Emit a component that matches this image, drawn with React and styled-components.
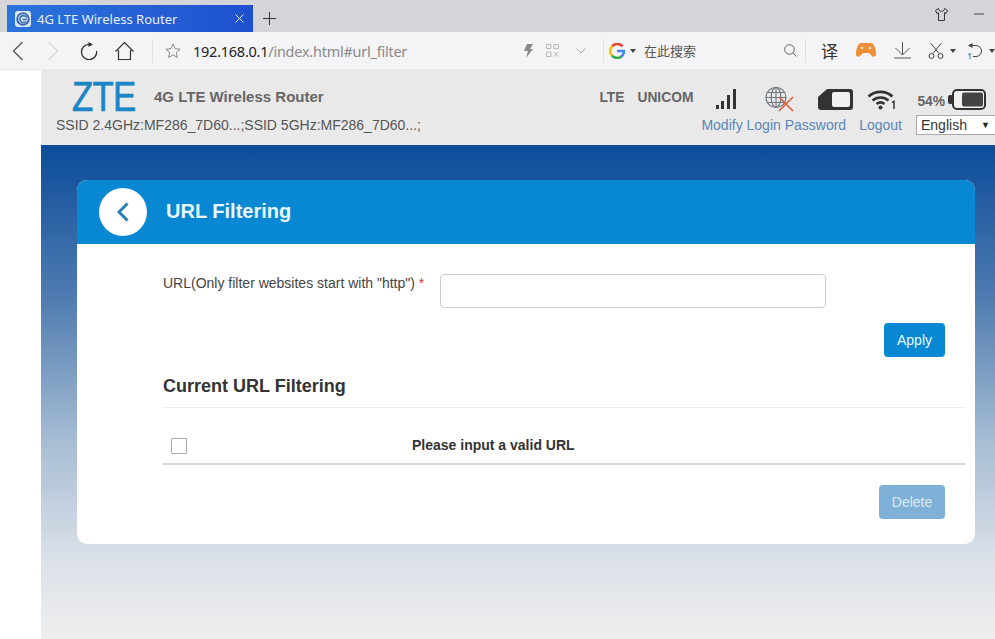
import React from 'react';
import styled, { createGlobalStyle } from 'styled-components';

const GlobalStyle = createGlobalStyle`
  html, body {
    margin: 0;
    padding: 0;
    height: 100%;
    overflow: hidden;
    background: #fff;
    font-family: "Liberation Sans", Arial, sans-serif;
  }
`;

const Page = styled.div`
  width: 995px;
  height: 639px;
  display: flex;
  flex-direction: column;
  overflow: hidden;
`;

/* browser chrome */
const TabBar = styled.div`
  height: 32px;
  flex-shrink: 0;
  display: flex;
  align-items: flex-end;
  padding-left: 7px;
  background: #d5d5d9;
`;

const Tab = styled.div`
  width: 246px;
  height: 27px;
  box-sizing: border-box;
  display: flex;
  align-items: center;
  padding: 0 9px 0 8px;
  background: linear-gradient(90deg, #2b74dc, #1f50cf);
  color: #e8f0ff;
  font: 13px "Noto Sans", "Liberation Sans", sans-serif;
`;

const TabTitle = styled.span`
  flex: 1;
  margin-left: 6px;
`;

const NewTab = styled.div`
  height: 27px;
  display: flex;
  align-items: center;
  margin-left: 10px;
`;

const WindowButtons = styled.div`
  margin-left: auto;
  height: 32px;
  box-sizing: border-box;
  display: flex;
  align-items: center;
  gap: 26px;
  padding: 0 11px 4px 0;
`;

const NavBar = styled.div`
  height: 37px;
  flex-shrink: 0;
  display: flex;
  align-items: center;
  background: #f4f4f6;
  border-bottom: 1px solid #eaeaea;
`;

const Slot = styled.div`
  width: ${({ $w }) => $w}px;
  flex-shrink: 0;
  display: flex;
  align-items: center;
  justify-content: center;
`;

const Divider = styled.div`
  width: 1px;
  height: 24px;
  flex-shrink: 0;
  background: #e0e0e2;
`;

const Url = styled.div`
  width: 323px;
  flex-shrink: 0;
  color: #8a8a8a;
  font: 14.5px "Noto Sans", sans-serif;
  letter-spacing: -0.25px;
  white-space: nowrap;
  b {
    font-weight: 400;
    color: #222;
  }
`;

const SearchText = styled.div`
  width: 131px;
  padding-left: 8px;
  flex-shrink: 0;
  color: #555;
  font: 13px "Noto Sans CJK SC", sans-serif;
`;

const Translate = styled.span`
  color: #333;
  font: 17px "Noto Sans CJK SC", sans-serif;
`;

/* router page */
const Content = styled.div`
  flex: 1;
  display: flex;
  min-height: 0;
`;

const Gutter = styled.div`
  width: 41px;
  flex-shrink: 0;
  background: #fff;
`;

const Main = styled.div`
  flex: 1;
  min-width: 0;
  display: flex;
  flex-direction: column;
`;

const Header = styled.header`
  height: 75px;
  flex-shrink: 0;
  box-sizing: border-box;
  padding: 8px 0 0 15px;
  overflow: hidden;
  background: #e9e9e9;
`;

const HeaderRow = styled.div`
  display: flex;
  align-items: center;
  height: ${({ $h }) => $h}px;
`;

const Logo = styled.div`
  width: 81px;
  margin: 0 -17px 0 16px;
  color: #1b85c6;
  -webkit-text-stroke: 0.7px #1b85c6;
  font-size: 43px;
  line-height: 37px;
  letter-spacing: -1px;
  transform: scaleX(0.81);
  transform-origin: left center;
  white-space: nowrap;
`;

const ProductName = styled.div`
  margin-left: 18px;
  color: #666;
  font-size: 15px;
  font-weight: 700;
`;

const StatusGroup = styled.div`
  margin-left: auto;
  display: flex;
  align-items: center;
  height: 100%;
  padding-top: 5px;
  box-sizing: border-box;
`;

const StatusText = styled.span`
  color: #666;
  font-size: 13.8px;
  font-weight: 700;
  margin-top: ${({ $mt }) => $mt}px;
  margin-right: ${({ $mr }) => $mr}px;
`;

const StatusIcon = styled.div`
  display: flex;
  margin-right: ${({ $mr }) => $mr}px;
`;

const Ssid = styled.div`
  color: #555;
  font-size: 14px;
  white-space: nowrap;
`;

const Links = styled.div`
  margin-left: auto;
  display: flex;
  align-items: center;
  margin-right: -11px;
`;

const HeaderLink = styled.a`
  color: #5b86b8;
  font-size: 14px;
  margin-right: ${({ $mr }) => $mr}px;
`;

const LangSelect = styled.div`
  width: 90px;
  height: 20px;
  box-sizing: border-box;
  display: flex;
  align-items: center;
  padding-left: 4px;
  background: #fff;
  border: 1px solid #a9a9a9;
  color: #333;
  font-size: 14px;
`;

const LangArrow = styled.span`
  margin-left: 14px;
  font-size: 9px;
  color: #222;
`;

const Body = styled.div`
  flex: 1;
  min-height: 0;
  padding: 35px 20px 0 36px;
  background: linear-gradient(180deg, #0b4b9a 0%, #4f7cb0 31%, #a7bdd4 60%, #dde2e9 85%, #eeeeee 100%);
`;

const Card = styled.section`
  height: 364px;
  border-radius: 10px;
  overflow: hidden;
  background: #fff;
`;

const CardHeader = styled.div`
  height: 64px;
  display: flex;
  align-items: center;
  padding-left: 22px;
  background: #0887d3;
`;

const BackCircle = styled.div`
  width: 48px;
  height: 48px;
  border-radius: 50%;
  background: #fff;
  display: flex;
  align-items: center;
  justify-content: center;
`;

const CardTitle = styled.h1`
  margin: -2px 0 0 19px;
  color: #e8f8ff;
  font-size: 20px;
  font-weight: 700;
`;

const CardBody = styled.div`
  padding: 30px 10px 0 86px;
`;

const FormRow = styled.div`
  display: flex;
  align-items: center;
`;

const Label = styled.label`
  width: 277px;
  flex-shrink: 0;
  color: #444;
  font-size: 14px;
  margin-top: -16px;
  i {
    color: #c33;
    font-style: normal;
  }
`;

const UrlInput = styled.input`
  width: 386px;
  height: 34px;
  box-sizing: border-box;
  border: 1px solid #ccc;
  border-radius: 4px;
  background: #fff;
`;

const ButtonRow = styled.div`
  display: flex;
  justify-content: flex-end;
  padding-right: 20px;
  margin-top: ${({ $mt }) => $mt}px;
`;

const Button = styled.button`
  width: ${({ $w }) => $w}px;
  height: ${({ $h }) => $h}px;
  padding: 0;
  border: none;
  border-radius: 4px;
  background: ${({ disabled }) => (disabled ? '#7fb0d8' : '#0887d3')};
  color: ${({ disabled }) => (disabled ? '#dcebf5' : '#e8f8ff')};
  font-family: inherit;
  font-size: 14px;
`;

const SectionTitle = styled.h2`
  margin: 17px 0 0;
  height: 33px;
  border-bottom: 1px solid #eee;
  color: #333;
  font-size: 18px;
  line-height: 25px;
  font-weight: 700;
`;

const TableRow = styled.div`
  display: grid;
  grid-template-columns: 249px 1fr;
  align-items: center;
  height: 57px;
  box-sizing: border-box;
  border-bottom: 2px solid #d9d9d9;
  padding-top: 20px;
  color: #333;
  font-size: 14px;
  font-weight: 700;
`;

const RowText = styled.span`
  margin-top: -2px;
`;

const CheckBox = styled.div`
  width: 16px;
  height: 16px;
  box-sizing: border-box;
  margin-left: 8px;
  border: 1px solid #aaa;
  border-radius: 1px;
  background: #fff;
`;

/* icons */
const Svg = ({ w, h = w, children, ...rest }) => (
  <svg width={w} height={h} viewBox={`0 0 ${w} ${h}`} fill="none" style={{ display: 'block' }} {...rest}>
    {children}
  </svg>
);

const Favicon = () => (
  <Svg w={16}>
    <rect width="16" height="16" rx="3" fill="#dfe8f5" />
    <circle cx="8" cy="8" r="5.8" stroke="#3a6db5" strokeWidth="2" />
    <path d="M11.5 6.5A3.5 3.5 0 1 0 11 10.5M7.5 8.5h4.5" stroke="#3a6db5" strokeWidth="1.6" />
  </Svg>
);

const Caret = () => (
  <Svg w={6} h={4}>
    <path d="M0 0h6L3 4z" fill="#444" />
  </Svg>
);

const GoogleG = () => (
  <Svg w={16}>
    <path d="M13.6 3.3A7 7 0 0 0 3 3.4" stroke="#ea4335" strokeWidth="2.6" />
    <path d="M3.2 3.2a7 7 0 0 0 0 9.6" stroke="#fbbc05" strokeWidth="2.6" />
    <path d="M3 12.6a7 7 0 0 0 9.5.8" stroke="#34a853" strokeWidth="2.6" />
    <path d="M12.2 13.6A7 7 0 0 0 15 8H8" stroke="#4285f4" strokeWidth="2.6" />
  </Svg>
);

const Globe = () => (
  <Svg w={30} h={25}>
    <g stroke="#6f7780" strokeWidth="1.2">
      <circle cx="11" cy="10.500" r="10" />
      <ellipse cx="11" cy="10.500" rx="4.800" ry="10" />
      <path d="M11 .5v20M1 10.500h20M2.500 5.500h17M2.500 15.500h17" />
    </g>
    <path d="M14 10l14 14M28 10L14 24" stroke="#e2572b" strokeWidth="1.500" />
  </Svg>
);

const Wifi = () => (
  <Svg w={30} h={21}>
    <g stroke="#333" strokeWidth="2.6">
      <path d="M1.5 7.5a18 18 0 0 1 24 0" />
      <path d="M5.5 11.5a12 12 0 0 1 16 0" />
      <path d="M9.5 15a6.5 6.5 0 0 1 8 0" />
    </g>
    <circle cx="13.5" cy="18.5" r="2" fill="#333" />
    <path d="M25 13.5l2-1.2V20" stroke="#444" strokeWidth="1.6" />
  </Svg>
);

const Battery = () => (
  <Svg w={38} h={21}>
    <rect x="0" y="6" width="5" height="9" rx="2" fill="#333" />
    <rect x="5" y="1" width="32" height="19" rx="4" fill="#f1f1f1" stroke="#333" strokeWidth="2" />
    <rect x="14" y="3.500" width="21" height="14" rx="2" fill="#444" />
  </Svg>
);

const App = () => (
  <Page>
    <GlobalStyle />
    <TabBar>
      <Tab>
        <Favicon />
        <TabTitle>4G LTE Wireless Router</TabTitle>
        <Svg w={9}>
          <path d="M.5.5l8 8M8.5.5l-8 8" stroke="#e8f0ff" />
        </Svg>
      </Tab>
      <NewTab>
        <Svg w={13}>
          <path d="M6.5 0v13M0 6.500h13" stroke="#333" />
        </Svg>
      </NewTab>
      <WindowButtons>
        <Svg w={13}>
          <path d="M3.500.5L.5 2.500l1.500 3 1.500-.8v7.800h6V4.700l1.500.8 1.500-3-3-2c-.5 2-1 2.800-3 2.800S4 2.500 3.500.5z" stroke="#333" />
        </Svg>
        <Svg w={10} h={2}>
          <path d="M0 1h10" stroke="#444" />
        </Svg>
      </WindowButtons>
    </TabBar>

    <NavBar>
      <Slot $w={35}>
        <Svg w={12} h={20}>
          <path d="M10.500 1L1.500 10l9 9" stroke="#555" strokeWidth="1.300" />
        </Svg>
      </Slot>
      <Slot $w={36}>
        <Svg w={12} h={20}>
          <path d="M1.500 1l9 9-9 9" stroke="#d8d8d8" strokeWidth="1.300" />
        </Svg>
      </Slot>
      <Slot $w={36}>
        <Svg w={18}>
          <path d="M9 2.400A7.600 7.600 0 1 0 16.600 9" stroke="#333" strokeWidth="1.300" />
          <path d="M8.500 0l4.500 2.500L8.500 5z" fill="#333" />
        </Svg>
      </Slot>
      <Slot $w={34}>
        <Svg w={19} h={18}>
          <path d="M.5 9.500l9-9 9 9M3.500 8v9.500h12V8" stroke="#333" strokeWidth="1.200" />
        </Svg>
      </Slot>
      <Slot $w={11} />
      <Divider />
      <Slot $w={40}>
        <Svg w={16}>
          <path d="M8 1l2.100 4.700 5 .5-3.800 3.300 1.100 5L8 11.900l-4.400 2.600 1.100-5L.9 6.200l5-.5z" stroke="#888" />
        </Svg>
      </Slot>
      <Url>
        <b>192.168.0.1</b>/index.html#url_filter
      </Url>
      <Slot $w={24}>
        <Svg w={9} h={14}>
          <path d="M3 0h6L6 5h3L2 14l2-7H0z" fill="#8a8a8a" />
        </Svg>
      </Slot>
      <Slot $w={25}>
        <Svg w={13} h={13}>
          <path d="M.5.500h4.500v4H.5zM8 .500h4.500v4H8zM.5 8H5v4.500H.5zM8 8l4.500 4.500M12.500 8L8 12.500" stroke="#b8b8b8" />
        </Svg>
      </Slot>
      <Slot $w={32}>
        <Svg w={10} h={6}>
          <path d="M.5.500L5 5 9.500.5" stroke="#aaa" />
        </Svg>
      </Slot>
      <Slot $w={6} />
      <Divider />
      <Slot $w={26}>
        <GoogleG />
      </Slot>
      <Slot $w={6}>
        <Caret />
      </Slot>
      <SearchText>在此搜索</SearchText>
      <Slot $w={30}>
        <Svg w={13}>
          <circle cx="5.500" cy="5.500" r="4.800" stroke="#666" />
          <path d="M9 9l3.500 3.500" stroke="#666" />
        </Svg>
      </Slot>
      <Divider />
      <Slot $w={47}>
        <Translate>译</Translate>
      </Slot>
      <Slot $w={25}>
        <Svg w={20} h={15}>
          <path d="M5 0h10c3 0 5 6 5 11 0 3-3 4-5 1l-2-2H7l-2 2c-2 3-5 2-5-1C0 6 2 0 5 0z" fill="#ef8f3a" />
          <circle cx="6" cy="5" r="1.300" fill="#fbe3cc" />
          <circle cx="14" cy="5" r="1.300" fill="#fbe3cc" />
        </Svg>
      </Slot>
      <Slot $w={49}>
        <Svg w={17}>
          <path d="M8.500 0v13M1.500 6l7 7 7-7M0 16h17" stroke="#555" />
        </Svg>
      </Slot>
      <Slot $w={17}>
        <Svg w={16}>
          <path d="M3 .5l8 10M13 .5l-8 10" stroke="#444" />
          <circle cx="3.500" cy="13" r="2.500" stroke="#444" />
          <circle cx="12.500" cy="13" r="2.500" stroke="#444" />
        </Svg>
      </Slot>
      <Slot $w={17}>
        <Caret />
      </Slot>
      <Slot $w={28}>
        <Svg w={16}>
          <path d="M5 2.500h4a5.500 5.500 0 0 1 0 11H6" stroke="#444" />
          <path d="M5.500 0L1 2.500 5.500 5z" fill="#444" />
          <path d="M1 11h3L2 13c2 0 2 3 0 3" stroke="#3b82c4" />
        </Svg>
      </Slot>
      <Slot $w={6}>
        <Caret />
      </Slot>
    </NavBar>

    <Content>
      <Gutter />
      <Main>
        <Header>
          <HeaderRow $h={37}>
            <Logo>ZTE</Logo>
            <ProductName>4G LTE Wireless Router</ProductName>
            <StatusGroup>
              <StatusText $mt={-4} $mr={13}>LTE</StatusText>
              <StatusText $mt={-4} $mr={23}>UNICOM</StatusText>
              <StatusIcon $mr={29}>
                <Svg w={20} h={21}>
                  <rect x="0" y="16" width="3" height="4" fill="#333" />
                  <rect x="5" y="12" width="3" height="8" fill="#333" />
                  <rect x="11" y="6" width="3" height="14" fill="#333" />
                  <rect x="17" y="0" width="3" height="20" fill="#333" />
                </Svg>
              </StatusIcon>
              <StatusIcon $mr={23}>
                <Globe />
              </StatusIcon>
              <StatusIcon $mr={14}>
                <Svg w={35} h={21}>
                  <path d="M9 0h23a3 3 0 0 1 3 3v15a3 3 0 0 1-3 3H3a3 3 0 0 1-3-3V8z" fill="#333" />
                  <rect x="14" y="3" width="18" height="15" rx="2" fill="#f1f1f1" />
                </Svg>
              </StatusIcon>
              <StatusIcon $mr={20}>
                <Wifi />
              </StatusIcon>
              <StatusText $mt={4} $mr={3}>54%</StatusText>
              <StatusIcon $mr={9}>
                <Battery />
              </StatusIcon>
            </StatusGroup>
          </HeaderRow>
          <HeaderRow $h={20}>
            <Ssid>SSID 2.4GHz:MF286_7D60...;SSID 5GHz:MF286_7D60...;</Ssid>
            <Links>
              <HeaderLink $mr={13}>Modify Login Password</HeaderLink>
              <HeaderLink $mr={14}>Logout</HeaderLink>
              <LangSelect>
                English
                <LangArrow>▼</LangArrow>
              </LangSelect>
            </Links>
          </HeaderRow>
        </Header>

        <Body>
          <Card>
            <CardHeader>
              <BackCircle>
                <Svg w={12} h={20}>
                  <path d="M10.500 1.500L2 10l8.500 8.500" stroke="#2a80b5" strokeWidth="3" />
                </Svg>
              </BackCircle>
              <CardTitle>URL Filtering</CardTitle>
            </CardHeader>
            <CardBody>
              <FormRow>
                <Label>
                  URL(Only filter websites start with "http") <i>*</i>
                </Label>
                <UrlInput />
              </FormRow>
              <ButtonRow $mt={15}>
                <Button $w={61} $h={34}>Apply</Button>
              </ButtonRow>
              <SectionTitle>Current URL Filtering</SectionTitle>
              <TableRow>
                <CheckBox />
                <RowText>Please input a valid URL</RowText>
              </TableRow>
              <ButtonRow $mt={20}>
                <Button $w={66} $h={34} disabled>Delete</Button>
              </ButtonRow>
            </CardBody>
          </Card>
        </Body>
      </Main>
    </Content>
  </Page>
);

export default App;
